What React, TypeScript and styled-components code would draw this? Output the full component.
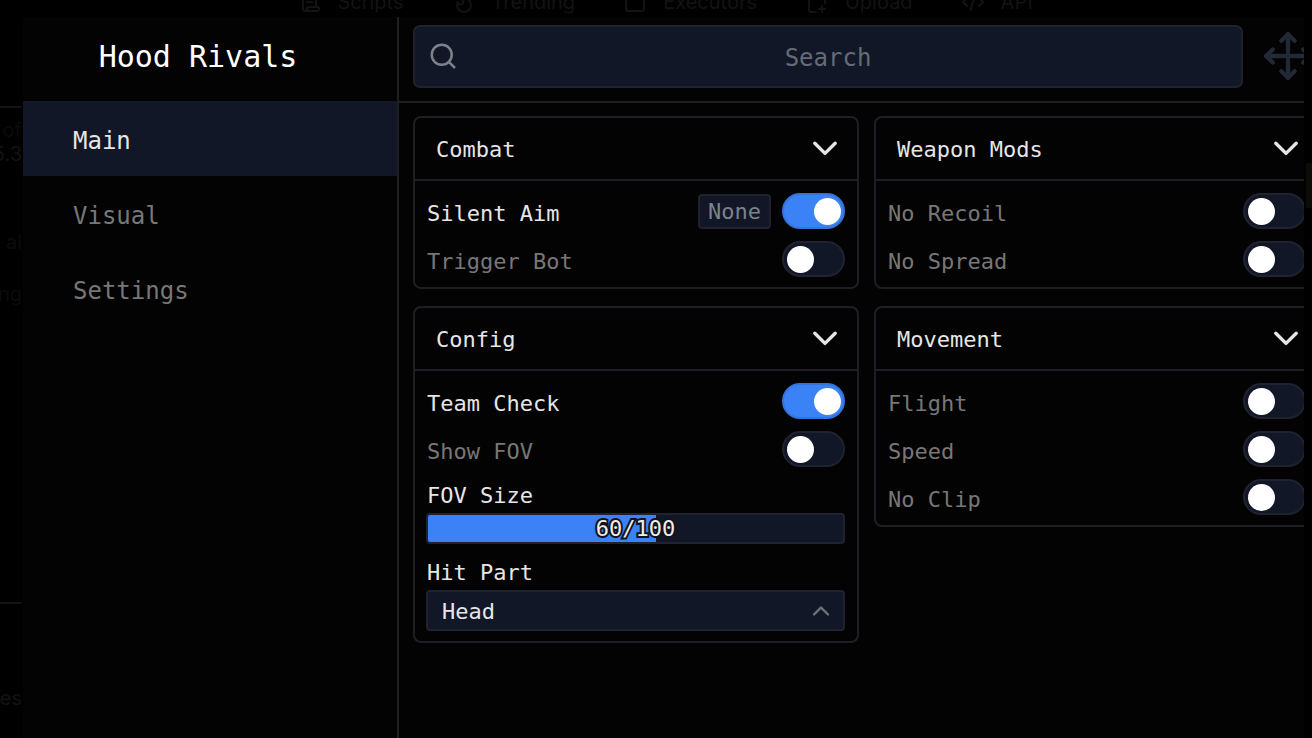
import React from "react";
import styled, { createGlobalStyle } from "styled-components";
import { ChevronDown, ChevronUp, CodeXml, FilePlus2, Flame, Move, ScrollText, Search, StickyNote } from "lucide-react";

const color = {
  page: "#000000",
  window: "#030304",
  line: "#1d1f24",
  field: "#111726",
  fieldLine: "#1f2330",
  accent: "#3b82f6",
  text: "#e6e6e6",
  muted: "#777777",
  ghost: "#131313",
};

const mono = `"DejaVu Sans Mono", "Liberation Mono", monospace`;

const GlobalStyle = createGlobalStyle`
  *, *::before, *::after { box-sizing: border-box; }
  body { margin: 0; background: ${color.page}; overflow: hidden; }
  button, input, select { font: inherit; color: inherit; margin: 0; }
`;

const Page = styled.div`
  position: relative;
  height: 100vh;
  overflow: hidden;
  background: ${color.page};
  color: ${color.text};
  font-family: ${mono};
  font-size: 22px;
  line-height: 32px;
`;

/* Dimmed website that sits behind the window */
const Site = styled.div`
  position: absolute;
  inset: 0;
  overflow: hidden;
  color: ${color.ghost};
  font-family: Inter, sans-serif;
  font-size: 20px;
  line-height: 24px;
`;

const SiteNav = styled.nav`
  display: flex;
  justify-content: center;
  gap: 48px;
  margin-top: -10px;
  padding-left: 18px;
`;

const SiteLink = styled.a`
  display: flex;
  align-items: center;
  gap: 16px;
  color: inherit;
  text-decoration: none;
`;

const SiteEdge = styled.div`
  display: flex;
  flex-direction: column;
  align-items: flex-end;
  width: 22px;
  margin-top: 92px;
`;

const EdgeText = styled.span<{ $space: number; $dim?: boolean }>`
  padding-top: ${(p) => p.$space}px;
  opacity: ${(p) => (p.$dim ? 0.6 : 1)};
`;

const EdgeRule = styled.hr<{ $space: number }>`
  width: 100%;
  margin: ${(p) => p.$space}px 0 0;
  border: 0;
  border-top: 2px solid ${color.ghost};
`;

/* Scroll bar thumb of the site, showing past the window's right edge */
const SiteThumb = styled.div`
  position: absolute;
  top: 163px;
  right: 0;
  width: 6px;
  height: 45px;
  background: #0d0c09;
`;

const Frame = styled.div`
  position: absolute;
  inset: 17px 8px 0 23px;
  overflow: hidden;
  background: ${color.window};
`;

/* The window is wider than its frame, so its right edge is cut */
const Window = styled.div`
  display: flex;
  width: calc(100% + 30px);
  height: 100%;
`;

const Sidebar = styled.aside`
  flex: none;
  width: 376px;
  border-right: 2px solid ${color.line};
`;

const Title = styled.h1`
  display: flex;
  align-items: center;
  justify-content: center;
  height: 84px;
  margin: 0;
  padding: 0 24px 4px 0;
  font-size: 30px;
  font-weight: 400;
  color: #ffffff;
`;

const Tab = styled.button<{ $active?: boolean }>`
  display: block;
  width: 100%;
  height: 75px;
  padding: 4px 50px 0;
  border: 0;
  background: ${(p) => (p.$active ? color.field : "transparent")};
  color: ${(p) => (p.$active ? color.text : color.muted)};
  font-size: 24px;
  text-align: left;
`;

const Main = styled.main`
  flex: 1;
  min-width: 0;
`;

const TopBar = styled.header`
  display: flex;
  align-items: center;
  gap: 21px;
  height: 86px;
  padding: 0 22px 6px 14px;
  border-bottom: 2px solid ${color.line};
`;

const SearchBox = styled.label`
  display: flex;
  flex: 1;
  align-items: center;
  height: 63px;
  padding: 0 43px 0 13px;
  border: 2px solid ${color.fieldLine};
  border-radius: 7px;
  background: ${color.field};
  color: #7c818c;
`;

const SearchInput = styled.input`
  flex: 1;
  min-width: 0;
  padding: 4px 0 0;
  border: 0;
  outline: 0;
  background: none;
  font-size: 24px;
  text-align: center;
  &::placeholder { color: #666b76; opacity: 1; }
`;

const MoveButton = styled.button`
  display: flex;
  padding: 0;
  border: 0;
  background: none;
  color: #232836;
`;

const Columns = styled.div`
  display: grid;
  grid-template-columns: 1fr 1fr;
  align-items: start;
  gap: 15px;
  padding: 13px 14px;
`;

const Column = styled.div`
  display: flex;
  flex-direction: column;
  gap: 17px;
`;

const PanelBox = styled.section`
  border: 2px solid ${color.line};
  border-radius: 8px;
`;

const PanelHeader = styled.button`
  display: flex;
  align-items: center;
  justify-content: space-between;
  width: 100%;
  height: 63px;
  padding: 2px 15px 0 21px;
  border: 0;
  border-bottom: 2px solid ${color.line};
  background: none;
`;

const PanelBody = styled.div`
  display: flex;
  flex-direction: column;
  gap: 12px;
  padding: 12px 12px 10px 11px;
`;

const Row = styled.div<{ $on?: boolean }>`
  display: flex;
  align-items: center;
  gap: 11px;
  height: 36px;
  color: ${(p) => (p.$on ? color.text : color.muted)};
`;

const RowLabel = styled.label`
  flex: 1;
  padding: 6px 0 0 1px;
`;

const Keybind = styled.button`
  height: 35px;
  padding: 0 8px;
  border: 2px solid ${color.fieldLine};
  border-radius: 4px;
  background: ${color.field};
  color: #7c818c;
`;

const Switch = styled.input`
  appearance: none;
  display: flex;
  align-items: center;
  flex: none;
  width: 63px;
  height: 36px;
  padding: 0 3px;
  border: 2px solid ${color.fieldLine};
  border-radius: 18px;
  background: ${color.field};
  &::before {
    content: "";
    width: 27px;
    height: 27px;
    border-radius: 50%;
    background: #ffffff;
  }
  &:checked {
    justify-content: flex-end;
    padding: 0 2px;
    border-color: #3474dc;
    background: ${color.accent};
  }
`;

const Field = styled.div`
  display: flex;
  flex-direction: column;
`;

const FieldLabel = styled.label`
  height: 34px;
  padding: 1px 0 0 1px;
`;

const SliderBox = styled.div`
  position: relative;
  display: flex;
`;

const Range = styled.input`
  appearance: none;
  width: 100%;
  height: 31px;
  border: 2px solid ${color.fieldLine};
  border-radius: 4px;
  background: linear-gradient(${color.accent}, ${color.accent}) 0 0 / var(--fill) 100% no-repeat ${color.field};
  &::-webkit-slider-thumb { appearance: none; width: 1px; height: 1px; }
`;

const RangeValue = styled.output`
  position: absolute;
  inset: 0;
  text-align: center;
  color: #f0ede6;
  pointer-events: none;
  -webkit-text-stroke: 4px #10131c;
  paint-order: stroke fill;
`;

const SelectBox = styled.div`
  position: relative;
  display: flex;
  align-items: center;
`;

const Select = styled.select`
  appearance: none;
  width: 100%;
  height: 41px;
  padding: 2px 14px 0;
  border: 2px solid ${color.fieldLine};
  border-radius: 4px;
  background: ${color.field};
`;

const SelectArrow = styled(ChevronUp)`
  position: absolute;
  right: 10px;
  color: #6f747e;
  pointer-events: none;
`;

type Option = { label: string; on?: boolean; bind?: string };

function Panel({ title, options, children }: { title: string; options: Option[]; children?: React.ReactNode }) {
  return (
    <PanelBox>
      <PanelHeader type="button" aria-expanded="true">
        {title}
        <ChevronDown strokeWidth={2} viewBox="2 3 20 20" width={34} height={34} />
      </PanelHeader>
      <PanelBody>
        {options.map((o) => {
          const id = o.label.toLowerCase().replace(/ /g, "-");
          return (
            <Row key={id} $on={o.on}>
              <RowLabel htmlFor={id}>{o.label}</RowLabel>
              {o.bind && <Keybind type="button">{o.bind}</Keybind>}
              <Switch id={id} type="checkbox" defaultChecked={o.on} />
            </Row>
          );
        })}
        {children}
      </PanelBody>
    </PanelBox>
  );
}

export default function App() {
  return (
    <Page>
      <GlobalStyle />
      <Site>
        <SiteNav>
          <SiteLink href="#scripts"><ScrollText size={24} />Scripts</SiteLink>
          <SiteLink href="#trending"><Flame size={24} />Trending</SiteLink>
          <SiteLink href="#executors"><StickyNote size={24} />Executors</SiteLink>
          <SiteLink href="#upload"><FilePlus2 size={24} />Upload</SiteLink>
          <SiteLink href="#api"><CodeXml size={24} />API</SiteLink>
        </SiteNav>
        <SiteEdge>
          <EdgeRule $space={0} />
          <EdgeText $space={10} $dim>of</EdgeText>
          <EdgeText $space={0}>5.3</EdgeText>
          <EdgeText $space={64} $dim>al</EdgeText>
          <EdgeText $space={28} $dim>ing</EdgeText>
          <EdgeRule $space={296} />
          <EdgeText $space={82}>les</EdgeText>
        </SiteEdge>
        <SiteThumb />
      </Site>
      <Frame>
        <Window>
          <Sidebar>
            <Title>Hood Rivals</Title>
            <nav>
              <Tab type="button" $active>Main</Tab>
              <Tab type="button">Visual</Tab>
              <Tab type="button">Settings</Tab>
            </nav>
          </Sidebar>
          <Main>
            <TopBar>
              <SearchBox>
                <Search size={30} strokeWidth={2} />
                <SearchInput type="text" placeholder="Search" aria-label="Search" />
              </SearchBox>
              <MoveButton type="button" aria-label="Move window">
                <Move width={48} height={48} viewBox="1 1 22 22" strokeWidth={2} />
              </MoveButton>
            </TopBar>
            <Columns>
              <Column>
                <Panel title="Combat" options={[{ label: "Silent Aim", on: true, bind: "None" }, { label: "Trigger Bot" }]} />
                <Panel title="Config" options={[{ label: "Team Check", on: true }, { label: "Show FOV" }]}>
                  <Field>
                    <FieldLabel htmlFor="fov-size">FOV Size</FieldLabel>
                    <SliderBox>
                      <Range
                        id="fov-size"
                        type="range"
                        min={0}
                        max={100}
                        defaultValue={60}
                        style={{ "--fill": "55%" } as React.CSSProperties}
                      />
                      <RangeValue htmlFor="fov-size">60/100</RangeValue>
                    </SliderBox>
                  </Field>
                  <Field>
                    <FieldLabel htmlFor="hit-part">Hit Part</FieldLabel>
                    <SelectBox>
                      <Select id="hit-part" defaultValue="Head">
                        <option>Head</option>
                      </Select>
                      <SelectArrow size={28} strokeWidth={2} />
                    </SelectBox>
                  </Field>
                </Panel>
              </Column>
              <Column>
                <Panel title="Weapon Mods" options={[{ label: "No Recoil" }, { label: "No Spread" }]} />
                <Panel title="Movement" options={[{ label: "Flight" }, { label: "Speed" }, { label: "No Clip" }]} />
              </Column>
            </Columns>
          </Main>
        </Window>
      </Frame>
    </Page>
  );
}
